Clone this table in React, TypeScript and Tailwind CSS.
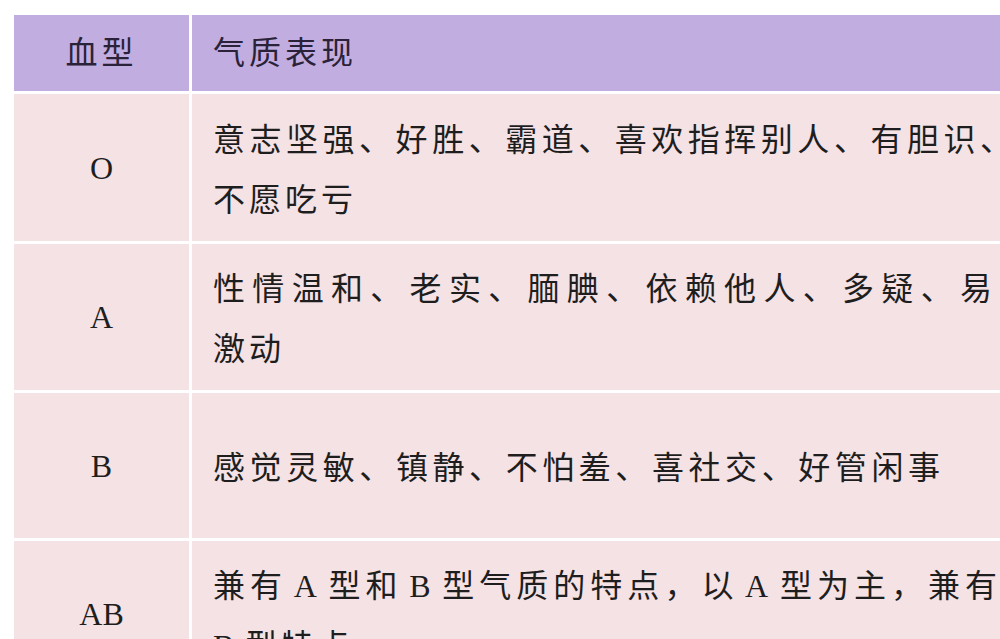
type Row = { type: string; h: string; first: string; firstW?: string; rest?: string };

const ROWS: Row[] = [
  { type: "O", h: "h-[147px]", first: "意志坚强、好胜、霸道、喜欢指挥别人、有胆识、", firstW: "w-[803px]", rest: "不愿吃亏" },
  { type: "A", h: "h-[146px]", first: "性情温和、老实、腼腆、依赖他人、多疑、易", firstW: "w-[783px]", rest: "激动" },
  { type: "B", h: "h-[145px]", first: "感觉灵敏、镇静、不怕羞、喜社交、好管闲事", firstW: "w-[731px]" },
  { type: "AB", h: "h-[146px]", first: "兼有\u200AA\u200A型和\u200AB\u200A型气质的特点，以\u200AA\u200A型为主，兼有", firstW: "w-[788px]", rest: "B\u200A型特点" },
];

const FONT = "font-['Liberation_Serif','Noto_Sans_CJK_SC',serif]";

export default function App() {
  return (
    <div className={`h-[639px] w-[1000px] overflow-hidden bg-white pl-[14px] pt-[15px] ${FONT}`}>
      <div className="grid w-[1100px] grid-cols-[175px_1fr] gap-[3px] bg-white">
        <div className="flex h-[76px] items-center justify-center bg-[#c1addf] text-[32px] tracking-[4px] text-[#2a2238]">
          血型
        </div>
        <div className="flex h-[76px] items-center bg-[#c1addf] pl-[21px] text-[32px] tracking-[4px] text-[#2a2238]">
          气质表现
        </div>

        {ROWS.map((r) => (
          <div key={r.type} className="contents">
            <div className={`flex ${r.h} items-center justify-center bg-[#f5e2e5] text-[32px] text-[#1e1e1e]`}>
              {r.type}
            </div>
            <div className={`flex ${r.h} flex-col justify-center bg-[#f5e2e5] pl-[21px] pt-[4px] text-[32px] tracking-[4px] text-[#1e1e1e]`}>
              <div className={`${r.firstW} whitespace-nowrap text-justify leading-[60px] [text-align-last:justify]`}>
                {r.first}
              </div>
              {r.rest && <div className="whitespace-nowrap leading-[60px]">{r.rest}</div>}
            </div>
          </div>
        ))}
      </div>
    </div>
  );
}
